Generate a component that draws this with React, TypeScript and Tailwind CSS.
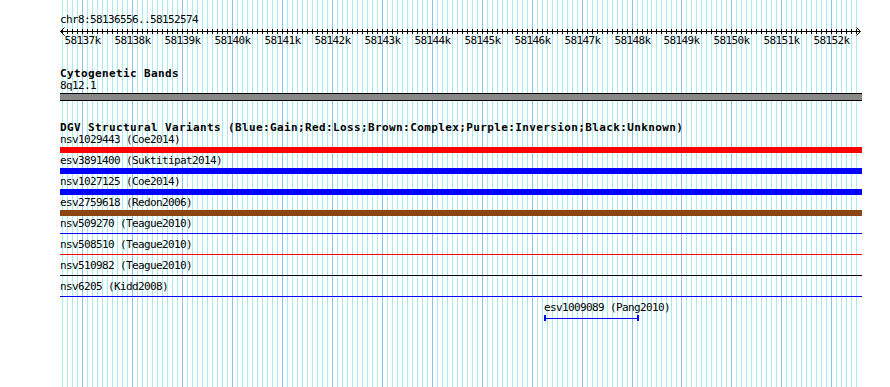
import React from "react";

const START = 58136556;
const END = 58152574;
const SPAN = END - START + 1;
const xOf = (bp: number) => 60 + ((bp - START) * 800) / SPAN;

const gridLines: { x: number; dark: boolean }[] = [];
for (let bp = 58136600; bp <= 58152500; bp += 100) {
  gridLines.push({ x: Math.round(xOf(bp)), dark: bp % 1000 === 0 });
}
const majors: { x: number; label: string }[] = [];
for (let k = 58137; k <= 58152; k++) {
  majors.push({ x: Math.round(xOf(k * 1000)), label: `${k}k` });
}

const mono = "font-['DejaVu_Sans_Mono','Liberation_Mono',monospace] text-[11px] leading-[12px] tracking-[-0.62px] text-black";
const monoBold = "font-['DejaVu_Sans_Mono','Liberation_Mono',monospace] text-[11px] leading-[12px] tracking-[0.38px] font-bold text-black";

type Row = { label: string; color: string; thick: boolean };
const rows: Row[] = [
  { label: "nsv1029443 (Coe2014)", color: "bg-[#ff0000]", thick: true },
  { label: "esv3891400 (Suktitipat2014)", color: "bg-[#0000ff]", thick: true },
  { label: "nsv1027125 (Coe2014)", color: "bg-[#0000ff]", thick: true },
  { label: "esv2759618 (Redon2006)", color: "bg-[#8b4513]", thick: true },
  { label: "nsv509270 (Teague2010)", color: "bg-[#0000ff]", thick: false },
  { label: "nsv508510 (Teague2010)", color: "bg-[#ff0000]", thick: false },
  { label: "nsv510982 (Teague2010)", color: "bg-[#000000]", thick: false },
  { label: "nsv6205 (Kidd2008)", color: "bg-[#0000ff]", thick: false },
];

function Grid() {
  return (
    <svg className="absolute left-0 top-0" width={890} height={387} shapeRendering="crispEdges">
      {gridLines.map((g, i) => (
        <rect key={i} x={g.x} y={0} width={1} height={387} fill={g.dark ? "#8cc2ee" : "#a8ecf0"} />
      ))}
    </svg>
  );
}

function Ruler() {
  const y = 5;
  return (
    <svg width={890} height={24} className="block -ml-[60px] w-[890px] shrink-0" shapeRendering="crispEdges">
      <rect x={60} y={y} width={800} height={1} fill="#000" />
      {gridLines.map((g, i) => (
        <rect key={i} x={g.x} y={y - 2} width={1} height={5} fill="#000" />
      ))}
      <path d={`M60.5 ${y + 0.5} L64.5 ${y - 3.5} M60.5 ${y + 0.5} L64.5 ${y + 4.5}`} stroke="#000" strokeWidth={1} fill="none" shapeRendering="auto" />
      <path d={`M860.5 ${y + 0.5} L856.5 ${y - 3.5} M860.5 ${y + 0.5} L856.5 ${y + 4.5}`} stroke="#000" strokeWidth={1} fill="none" shapeRendering="auto" />
      {majors.map((m) => (
        <text
          key={m.label}
          x={m.x + 0.5}
          y={18}
          textAnchor="middle"
          fontFamily="'DejaVu Sans Mono','Liberation Mono',monospace"
          fontSize={11}
          letterSpacing={-0.62}
          fill="#000"
        >
          {m.label}
        </text>
      ))}
    </svg>
  );
}

export default function App() {
  return (
    <div className="relative w-[890px] h-[387px] bg-white overflow-hidden">
      <Grid />
      <div className="relative flex flex-col pl-[60px] pt-[14px]">
        <div className={mono}>chr8:58136556..58152574</div>
        <Ruler />
        <div className="h-[18px]" />
        <div className={monoBold}>Cytogenetic Bands</div>
        <div className={mono}>8q12.1</div>
        <div className="mt-[1px] h-[8px] w-[802px] border-y border-black bg-[#888888]" />
        <div className="h-[21px]" />
        <div className={monoBold}>
          DGV Structural Variants (Blue:Gain;Red:Loss;Brown:Complex;Purple:Inversion;Black:Unknown)
        </div>
        {rows.map((r) => (
          <div key={r.label} className="flex flex-col h-[21px]">
            <div className={mono}>{r.label}</div>
            <div className="mt-[1px] h-[6px] w-[802px] flex flex-col">
              {r.thick ? (
                <div className={`h-[6px] w-[802px] ${r.color}`} />
              ) : (
                <div className={`mt-[2px] h-[1px] w-[802px] ${r.color}`} />
              )}
            </div>
          </div>
        ))}
        <div className="flex flex-col ml-[484px] w-[130px]">
          <div className={mono}>esv1009089 (Pang2010)</div>
          <div className="mt-[1px] h-[6px] w-[95px] flex items-center">
            <div className="h-[6px] w-[2px] bg-[#0000ff]" />
            <div className="h-[1px] flex-1 bg-[#0000ff]" />
            <div className="h-[6px] w-[2px] bg-[#0000ff]" />
          </div>
        </div>
      </div>
    </div>
  );
}
